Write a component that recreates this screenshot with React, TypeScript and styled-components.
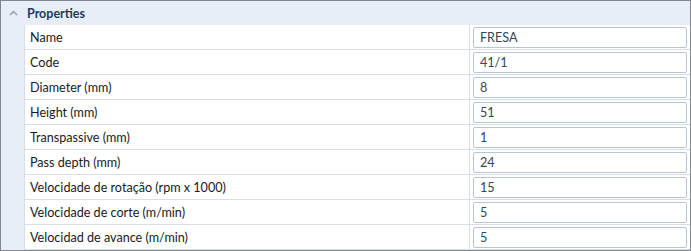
import React from 'react'
import styled, {createGlobalStyle} from 'styled-components'

const GlobalStyle = createGlobalStyle`
  html, body {
    margin: 0;
    padding: 0;
    background: #ffffff;
  }
  body {
    font-family: Lato, 'Noto Sans', sans-serif;
    font-size: 12px;
  }
`

interface Property {
  label: string
  value: string
}

const properties: Property[] = [
  {label: 'Name', value: 'FRESA'},
  {label: 'Code', value: '41/1'},
  {label: 'Diameter (mm)', value: '8'},
  {label: 'Height (mm)', value: '51'},
  {label: 'Transpassive (mm)', value: '1'},
  {label: 'Pass depth (mm)', value: '24'},
  {label: 'Velocidade de rotação (rpm x 1000)', value: '15'},
  {label: 'Velocidade de corte (m/min)', value: '5'},
  {label: 'Velocidad de avance (m/min)', value: '5'},
]

const Panel = styled.div`
  width: 691px;
  height: 251px;
  box-sizing: border-box;
  border: 1px solid #828790;
  background: #e8eef8;
  display: flex;
  flex-direction: column;
  overflow: hidden;
`

const Header = styled.div`
  height: 24px;
  display: flex;
  align-items: center;
  flex-shrink: 0;
`

const Chevron = styled.span`
  width: 24px;
  display: flex;
  justify-content: center;
  align-items: center;

  svg {
    display: block;
  }
`

const Title = styled.span`
  font-weight: bold;
  font-size: 12.5px;
  color: #1e395b;
  margin-left: 2px;
`

const Body = styled.div`
  display: flex;
  flex: 1;
`

const Indent = styled.div`
  width: 23px;
  flex-shrink: 0;
`

const Grid = styled.div`
  flex: 1;
  display: grid;
  grid-template-columns: 445px 1fr;
  grid-auto-rows: 25px;
  background: #ffffff;
  border-left: 1px solid #d5dfe5;
`

const LabelCell = styled.div`
  display: flex;
  align-items: center;
  padding-left: 5px;
  color: #1a1a1a;
  font-size: 12.6px;
  border-bottom: 1px solid #d5dfe5;
  border-right: 1px solid #d5dfe5;
  white-space: nowrap;
`

const ValueCell = styled.div`
  display: flex;
  align-items: center;
  padding: 0 3px 0 3px;
  border-bottom: 1px solid #d5dfe5;
`

const ValueBox = styled.div`
  flex: 1;
  height: 21px;
  box-sizing: border-box;
  border: 1px solid #b9c5d3;
  border-radius: 2px;
  display: flex;
  align-items: center;
  padding-left: 6px;
  color: #34475a;
  font-size: 12.6px;
  background: #ffffff;
`

export default function App() {
  return (
    <>
      <GlobalStyle />
      <Panel>
        <Header>
          <Chevron>
            <svg width='9' height='6' viewBox='0 0 9 6'>
              <path d='M1 5 L4.5 1.5 L8 5' fill='none' stroke='#8a9bb0' strokeWidth='1.3' />
            </svg>
          </Chevron>
          <Title>Properties</Title>
        </Header>
        <Body>
          <Indent />
          <Grid>
            {properties.map((p) => (
              <React.Fragment key={p.label}>
                <LabelCell>{p.label}</LabelCell>
                <ValueCell>
                  <ValueBox>{p.value}</ValueBox>
                </ValueCell>
              </React.Fragment>
            ))}
          </Grid>
        </Body>
      </Panel>
    </>
  )
}
